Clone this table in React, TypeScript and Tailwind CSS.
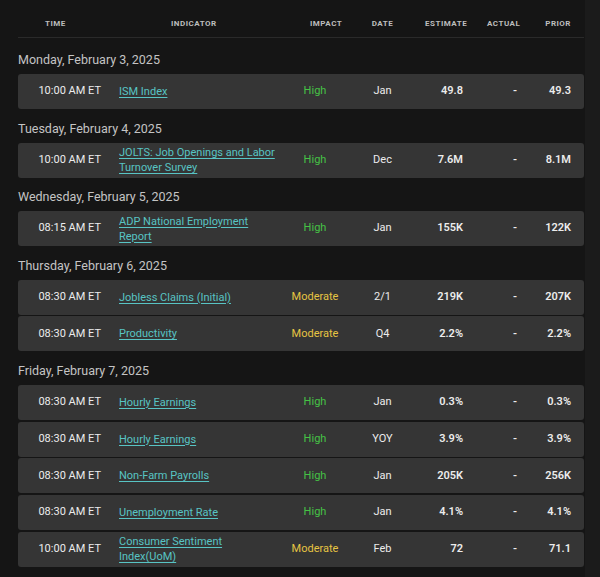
type Row = {
    time: string;
    name: string;
    impact: 'High' | 'Moderate';
    period: string;
    estimate: string;
    actual: string;
    prior: string;
};

const days: { label: string; rows: Row[] }[] = [
    {
        label: 'Monday, February 3, 2025',
        rows: [{ time: '10:00 AM ET', name: 'ISM Index', impact: 'High', period: 'Jan', estimate: '49.8', actual: '-', prior: '49.3' }],
    },
    {
        label: 'Tuesday, February 4, 2025',
        rows: [{ time: '10:00 AM ET', name: 'JOLTS: Job Openings and Labor Turnover Survey', impact: 'High', period: 'Dec', estimate: '7.6M', actual: '-', prior: '8.1M' }],
    },
    {
        label: 'Wednesday, February 5, 2025',
        rows: [{ time: '08:15 AM ET', name: 'ADP National Employment Report', impact: 'High', period: 'Jan', estimate: '155K', actual: '-', prior: '122K' }],
    },
    {
        label: 'Thursday, February 6, 2025',
        rows: [
            { time: '08:30 AM ET', name: 'Jobless Claims (Initial)', impact: 'Moderate', period: '2/1', estimate: '219K', actual: '-', prior: '207K' },
            { time: '08:30 AM ET', name: 'Productivity', impact: 'Moderate', period: 'Q4', estimate: '2.2%', actual: '-', prior: '2.2%' },
        ],
    },
    {
        label: 'Friday, February 7, 2025',
        rows: [
            { time: '08:30 AM ET', name: 'Hourly Earnings', impact: 'High', period: 'Jan', estimate: '0.3%', actual: '-', prior: '0.3%' },
            { time: '08:30 AM ET', name: 'Hourly Earnings', impact: 'High', period: 'YOY', estimate: '3.9%', actual: '-', prior: '3.9%' },
            { time: '08:30 AM ET', name: 'Non-Farm Payrolls', impact: 'High', period: 'Jan', estimate: '205K', actual: '-', prior: '256K' },
            { time: '08:30 AM ET', name: 'Unemployment Rate', impact: 'High', period: 'Jan', estimate: '4.1%', actual: '-', prior: '4.1%' },
            { time: '10:00 AM ET', name: 'Consumer Sentiment Index(UoM)', impact: 'Moderate', period: 'Feb', estimate: '72', actual: '-', prior: '71.1' },
        ],
    },
];

const cols = 'grid grid-cols-[93px_179px_50px_85px_40px_70px_49px] items-center';

function HeaderRow() {
    return (
        <div className={`${cols} h-[38px] border-b border-[#2a2a2a] pt-[11px] text-[8px] font-bold uppercase tracking-[0.5px] text-[#bdbdbd]`}>
            <div className="pl-[27px]">Time</div>
            <div className="pl-[60px]">Indicator</div>
            <div className="pl-[20px] whitespace-nowrap">Impact</div>
            <div className="text-center">Date</div>
            <div className="text-right whitespace-nowrap">Estimate</div>
            <div className="pl-[22px]">Actual</div>
            <div className="pr-[13px] text-right">Prior</div>
        </div>
    );
}

function EventRow({ row }: { row: Row }) {
    return (
        <div className={`${cols} h-[35px] rounded-[3px] bg-[#353535] text-[11px] text-[#ececec]`}>
            <div className="pr-[10px] text-right whitespace-nowrap">{row.time}</div>
            <div className="pl-[8px] pr-[11px] leading-[15px]">
                <a href="#" className="text-[#58c4c4] underline underline-offset-2">
                    {row.name}
                </a>
            </div>
            <div className={`text-center whitespace-nowrap ${row.impact === 'High' ? 'text-[#45c245]' : 'text-[#e6c443]'}`}>
                {row.impact}
            </div>
            <div className="text-center">{row.period}</div>
            <div className="pr-[2px] text-right font-semibold">{row.estimate}</div>
            <div className="pr-[18px] text-right font-semibold">{row.actual}</div>
            <div className="pr-[13px] text-right font-semibold">{row.prior}</div>
        </div>
    );
}

export default function App() {
    return (
        <div className="flex min-h-[577px] bg-[#1b1b1b] font-['Roboto',sans-serif]">
            <div className="w-[585px] bg-[#151515] pl-[18px] pr-px pb-4">
                <HeaderRow />
                <div className="pt-[12px]">
                    {days.map((day) => (
                        <div key={day.label} className="mb-[9.5px]">
                            <h3 className="h-[20px] text-[12.5px] leading-[20px] text-[#c4c4c4] mb-[4px]">{day.label}</h3>
                            <div className="flex flex-col gap-[1.75px]">
                                {day.rows.map((row, i) => (
                                    <EventRow key={i} row={row} />
                                ))}
                            </div>
                        </div>
                    ))}
                </div>
            </div>
        </div>
    );
}
